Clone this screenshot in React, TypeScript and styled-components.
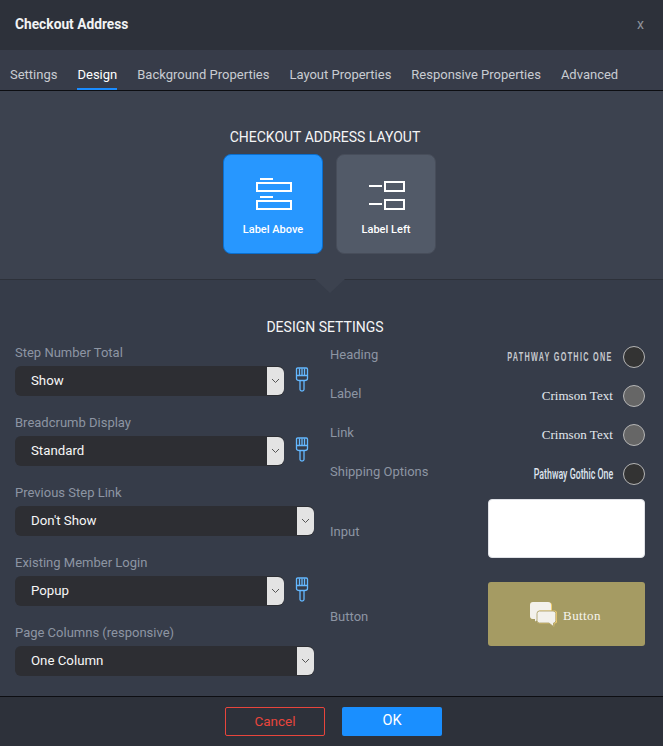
import React from "react";
import styled, { createGlobalStyle } from "styled-components";

const Global = createGlobalStyle`
  html, body { margin: 0; padding: 0; background: #363c49; }
  body { font-family: Roboto, "Liberation Sans", sans-serif; }
  * { box-sizing: border-box; }
`;

const Dialog = styled.div`
  width: 663px;
  height: 746px;
  display: flex;
  flex-direction: column;
  background: #363c49;
  overflow: hidden;
`;
const Header = styled.header`
  height: 50px;
  flex: none;
  background: #2d313a;
  display: flex;
  align-items: center;
  justify-content: space-between;
  padding: 0 19px 2px 15px;
`;
const Title = styled.h1`
  margin: 0;
  font-size: 13.75px;
  font-weight: 700;
  color: #f2f3f4;
`;
const Close = styled.span`
  font-size: 14px;
  color: #8f939b;
`;
const Tabs = styled.nav`
  height: 41px;
  flex: none;
  display: flex;
  gap: 20px;
  padding-left: 10px;
  background: #373c49;
  border-bottom: 1px solid #0d0e12;
`;
const Tab = styled.div<{ $active?: boolean }>`
  height: 40px;
  padding-top: 17px;
  font-size: 13px;
  line-height: 16px;
  color: ${(p) => (p.$active ? "#ffffff" : "#c9ccd2")};
  border-bottom: 2px solid ${(p) => (p.$active ? "#1a8cff" : "transparent")};
`;
const LayoutPanel = styled.section`
  height: 189px;
  flex: none;
  position: relative;
  background: #3c424f;
  border-bottom: 1px solid #2d313a;
  display: flex;
  flex-direction: column;
  align-items: center;
  padding: 38px 13px 0 0;
  &::after {
    content: "";
    position: absolute;
    left: 315px;
    bottom: -14px;
    width: 0;
    height: 0;
    border-left: 15px solid transparent;
    border-right: 15px solid transparent;
    border-top: 14px solid #3c424f;
  }
`;
const SectionTitle = styled.h2`
  margin: 0;
  font-size: 14px;
  line-height: 17px;
  font-weight: 400;
  color: #f5f5f6;
`;
const Choices = styled.div`
  display: flex;
  gap: 13px;
  margin-top: 8px;
  margin-left: 9px;
`;
const Choice = styled.div<{ $active?: boolean }>`
  width: 100px;
  height: 100px;
  border-radius: 8px;
  border: 1px solid ${(p) => (p.$active ? "#0a6fcf" : "#474d5a")};
  background: ${(p) => (p.$active ? "#2797ff" : "#525a68")};
  display: flex;
  flex-direction: column;
  align-items: center;
  padding: 23px 0 0 1px;
  color: #fff;
  font-size: 11px;
  font-weight: 500;
`;
const ChoiceLabel = styled.span`
  margin: 12px 1px 0 0;
  line-height: 14px;
`;
const Settings = styled.section`
  flex: 1;
  padding: 39px 13px 0 0;
  display: flex;
  flex-direction: column;
  align-items: center;
`;
const Columns = styled.div`
  align-self: stretch;
  display: flex;
  margin: 8px -13px 0 0;
`;
const LeftColumn = styled.div`
  width: 330px;
  flex: none;
  padding-left: 15px;
  display: flex;
  flex-direction: column;
  gap: 18px;
`;
const Field = styled.div`
  height: 52px;
`;
const FieldLabel = styled.div`
  font-size: 13px;
  line-height: 16px;
  height: 22px;
  padding-top: 1px;
  color: #8d95a3;
`;
const FieldRow = styled.div`
  display: flex;
  align-items: flex-start;
`;
const Select = styled.div<{ $short?: boolean }>`
  width: ${(p) => (p.$short ? 269 : 299)}px;
  height: 30px;
  background: #2d2e33;
  border-radius: 6px;
  display: flex;
  justify-content: space-between;
  padding-left: 16px;
  font-size: 13.25px;
  line-height: 29px;
  color: #f7f7f7;
`;
const Arrow = styled.span`
  width: 17px;
  height: 28px;
  margin-top: 1px;
  background: #e3e3e3;
  border-radius: 0 6px 6px 0;
  display: flex;
  align-items: center;
  justify-content: center;
`;
const Brush = styled.svg`
  width: 14px;
  height: 25px;
  margin-left: 11px;
  margin-top: 1px;
  flex: none;
`;
const RightColumn = styled.div`
  flex: 1;
  padding: 1px 18px 0 0;
  display: flex;
  flex-direction: column;
`;
const FontRow = styled.div`
  height: 39px;
  display: flex;
  justify-content: space-between;
  align-items: flex-start;
`;
const RowLabel = styled.span`
  font-size: 13px;
  line-height: 16px;
  color: #8d95a3;
`;
const FontLabel = styled(RowLabel)`
  margin-top: 2px;
`;
const FontChoice = styled.div`
  display: flex;
  align-items: center;
  height: 22px;
  margin-top: 1px;
  gap: 10px;
`;
const GothicCaps = styled.span`
  display: inline-block;
  font-family: "Liberation Sans", sans-serif;
  font-weight: 700;
  font-size: 12.5px;
  letter-spacing: 2.2px;
  color: #c6c9ce;
  white-space: nowrap;
  transform: scaleX(0.58);
  transform-origin: right center;
`;
const GothicText = styled.span`
  display: inline-block;
  font-family: Roboto, sans-serif;
  font-weight: 500;
  font-size: 14px;
  color: #dfe5ee;
  white-space: nowrap;
  transform: scaleX(0.63);
  transform-origin: right center;
`;
const SerifText = styled.span`
  font-family: "Liberation Serif", serif;
  font-size: 13px;
  letter-spacing: 0.05px;
  color: #e3e8ee;
`;
const Swatch = styled.span<{ $color: string }>`
  width: 22px;
  height: 22px;
  border-radius: 50%;
  background: ${(p) => p.$color};
  border: 1.5px solid #b5b5b5;
`;
const InputRow = styled.div`
  display: flex;
  justify-content: space-between;
  height: 59px;
  margin-top: -2px;
  align-items: center;
`;
const InputLabel = styled(RowLabel)`
  margin-top: 6px;
`;
const InputPreview = styled.div`
  width: 157px;
  height: 59px;
  background: #fff;
  border-radius: 4px;
  border: 1px solid #dfe1e6;
`;
const ButtonRow = styled.div`
  display: flex;
  justify-content: space-between;
  height: 64px;
  margin-top: 24px;
  align-items: flex-start;
`;
const ButtonLabel = styled(RowLabel)`
  margin-top: 27px;
`;
const ButtonPreview = styled.div`
  width: 157px;
  height: 64px;
  padding-right: 2px;
  background: #a59b63;
  border-radius: 3px;
  display: flex;
  align-items: center;
  justify-content: center;
  gap: 6px;
  font-family: "Liberation Serif", serif;
  font-size: 13px;
  letter-spacing: 0.4px;
  color: #f7f5ee;
`;
const ButtonText = styled.span`
  padding-top: 3px;
`;
const Footer = styled.footer`
  height: 50px;
  flex: none;
  background: #2d313a;
  border-top: 1px solid #0d0e12;
  display: flex;
  justify-content: center;
  gap: 17px;
  padding: 10px 0 0 4px;
`;
const CancelButton = styled.button`
  width: 100px;
  height: 29px;
  background: transparent;
  border: 1px solid #e8453c;
  border-radius: 2px;
  color: #e8453c;
  font: 400 13.5px Roboto, sans-serif;
  padding: 0 0 2px;
`;
const OkButton = styled.button`
  width: 100px;
  height: 29px;
  background: #1a8fff;
  border: none;
  border-radius: 2px;
  color: #fff;
  font: 400 14.5px Roboto, sans-serif;
  padding: 0 0 2px;
`;

const BrushIcon = () => (
  <Brush viewBox="0 0 14 25" fill="none" stroke="#64b8ff" strokeWidth="1.3">
    <path d="M1.500 2.200Q1.500 1 2.700 1H11.300Q12.500 1 12.500 2.200V11.500Q12.500 13.500 9.500 13.500H4.500Q1.500 13.500 1.500 11.500Z" />
    <path d="M1.500 8.500H12.500M4.500 1.500V8M7 1.500V8M9.500 1.500V8" />
    <path d="M5 13.500V22.500Q5 24 7 24Q9 24 9 22.500V13.500" />
  </Brush>
);
const Chevron = () => (
  <svg width="9" height="6" viewBox="0 0 9 6" fill="none" stroke="#555" strokeWidth="1">
    <path d="M1 1L4.500 4.500L8 1" />
  </svg>
);

const AboveIcon = () => (
  <svg width="36" height="33" viewBox="0 0 36 33" fill="none" stroke="#fff" strokeWidth="2">
    <path d="M4 1H17M4 19H17" />
    <rect x="1" y="5" width="34" height="8" />
    <rect x="1" y="23" width="34" height="8" />
  </svg>
);
const LeftIcon = () => (
  <svg width="36" height="33" viewBox="0 0 36 33" fill="none" stroke="#fff" strokeWidth="2">
    <path d="M0 8H13M0 26H13" />
    <rect x="16" y="4" width="19" height="9" />
    <rect x="16" y="22" width="19" height="9" />
  </svg>
);
const ChatIcon = () => (
  <svg width="27" height="25" viewBox="0 0 27 25" style={{ display: "block" }}>
    <path d="M3 0.500H19Q22 0.500 22 3.500V14Q22 17 19 17H9L5.500 19V17H3Q0.500 17 0.500 14V3Q0.500 0.500 3 0.500Z" fill="#f3ce70" />
    <path d="M3 0H18Q21 0 21 3V14Q21 17 18 17H9L5 19.500V17H3Q0 17 0 14V3Q0 0 3 0Z" fill="#f3f1ec" />
    <path d="M10 8.500H24Q27 8.500 27 11.500V19Q27 21.500 24.500 21.500L24 25L20 21.500H10Q7.500 21.500 7.500 19V11Q7.500 8.500 10 8.500Z" fill="#f3ce70" />
    <path d="M9.500 9H23Q25.800 9 25.800 11.500V18.500Q25.800 21 23.500 21L23.500 24.500L19 21H9.500Q7 21 7 18.500V11.500Q7 9 9.500 9Z" fill="#f3f1ec" stroke="#a59b63" strokeWidth="0.8" />
  </svg>
);

const fields = [
  { label: "Step Number Total", value: "Show", brush: true },
  { label: "Breadcrumb Display", value: "Standard", brush: true },
  { label: "Previous Step Link", value: "Don't Show", brush: false },
  { label: "Existing Member Login", value: "Popup", brush: true },
  { label: "Page Columns (responsive)", value: "One Column", brush: false },
];
const tabs = ["Settings", "Design", "Background Properties", "Layout Properties", "Responsive Properties", "Advanced"];

export default function App() {
  return (
    <Dialog>
      <Global />
      <Header>
        <Title>Checkout Address</Title>
        <Close>x</Close>
      </Header>
      <Tabs>
        {tabs.map((t) => (
          <Tab key={t} $active={t === "Design"}>{t}</Tab>
        ))}
      </Tabs>
      <LayoutPanel>
        <SectionTitle>CHECKOUT ADDRESS LAYOUT</SectionTitle>
        <Choices>
          <Choice $active>
            <AboveIcon />
            <ChoiceLabel>Label Above</ChoiceLabel>
          </Choice>
          <Choice>
            <LeftIcon />
            <ChoiceLabel>Label Left</ChoiceLabel>
          </Choice>
        </Choices>
      </LayoutPanel>
      <Settings>
        <SectionTitle>DESIGN SETTINGS</SectionTitle>
        <Columns>
          <LeftColumn>
            {fields.map((f) => (
              <Field key={f.label}>
                <FieldLabel>{f.label}</FieldLabel>
                <FieldRow>
                  <Select $short={f.brush}>
                    {f.value}
                    <Arrow><Chevron /></Arrow>
                  </Select>
                  {f.brush && <BrushIcon />}
                </FieldRow>
              </Field>
            ))}
          </LeftColumn>
          <RightColumn>
            <FontRow>
              <FontLabel>Heading</FontLabel>
              <FontChoice>
                <GothicCaps>PATHWAY GOTHIC ONE</GothicCaps>
                <Swatch $color="#333333" />
              </FontChoice>
            </FontRow>
            <FontRow>
              <FontLabel>Label</FontLabel>
              <FontChoice>
                <SerifText>Crimson Text</SerifText>
                <Swatch $color="#666666" />
              </FontChoice>
            </FontRow>
            <FontRow>
              <FontLabel>Link</FontLabel>
              <FontChoice>
                <SerifText>Crimson Text</SerifText>
                <Swatch $color="#666666" />
              </FontChoice>
            </FontRow>
            <FontRow>
              <FontLabel>Shipping Options</FontLabel>
              <FontChoice>
                <GothicText>Pathway Gothic One</GothicText>
                <Swatch $color="#333333" />
              </FontChoice>
            </FontRow>
            <InputRow>
              <InputLabel>Input</InputLabel>
              <InputPreview />
            </InputRow>
            <ButtonRow>
              <ButtonLabel>Button</ButtonLabel>
              <ButtonPreview>
                <ChatIcon />
                <ButtonText>Button</ButtonText>
              </ButtonPreview>
            </ButtonRow>
          </RightColumn>
        </Columns>
      </Settings>
      <Footer>
        <CancelButton>Cancel</CancelButton>
        <OkButton>OK</OkButton>
      </Footer>
    </Dialog>
  );
}
